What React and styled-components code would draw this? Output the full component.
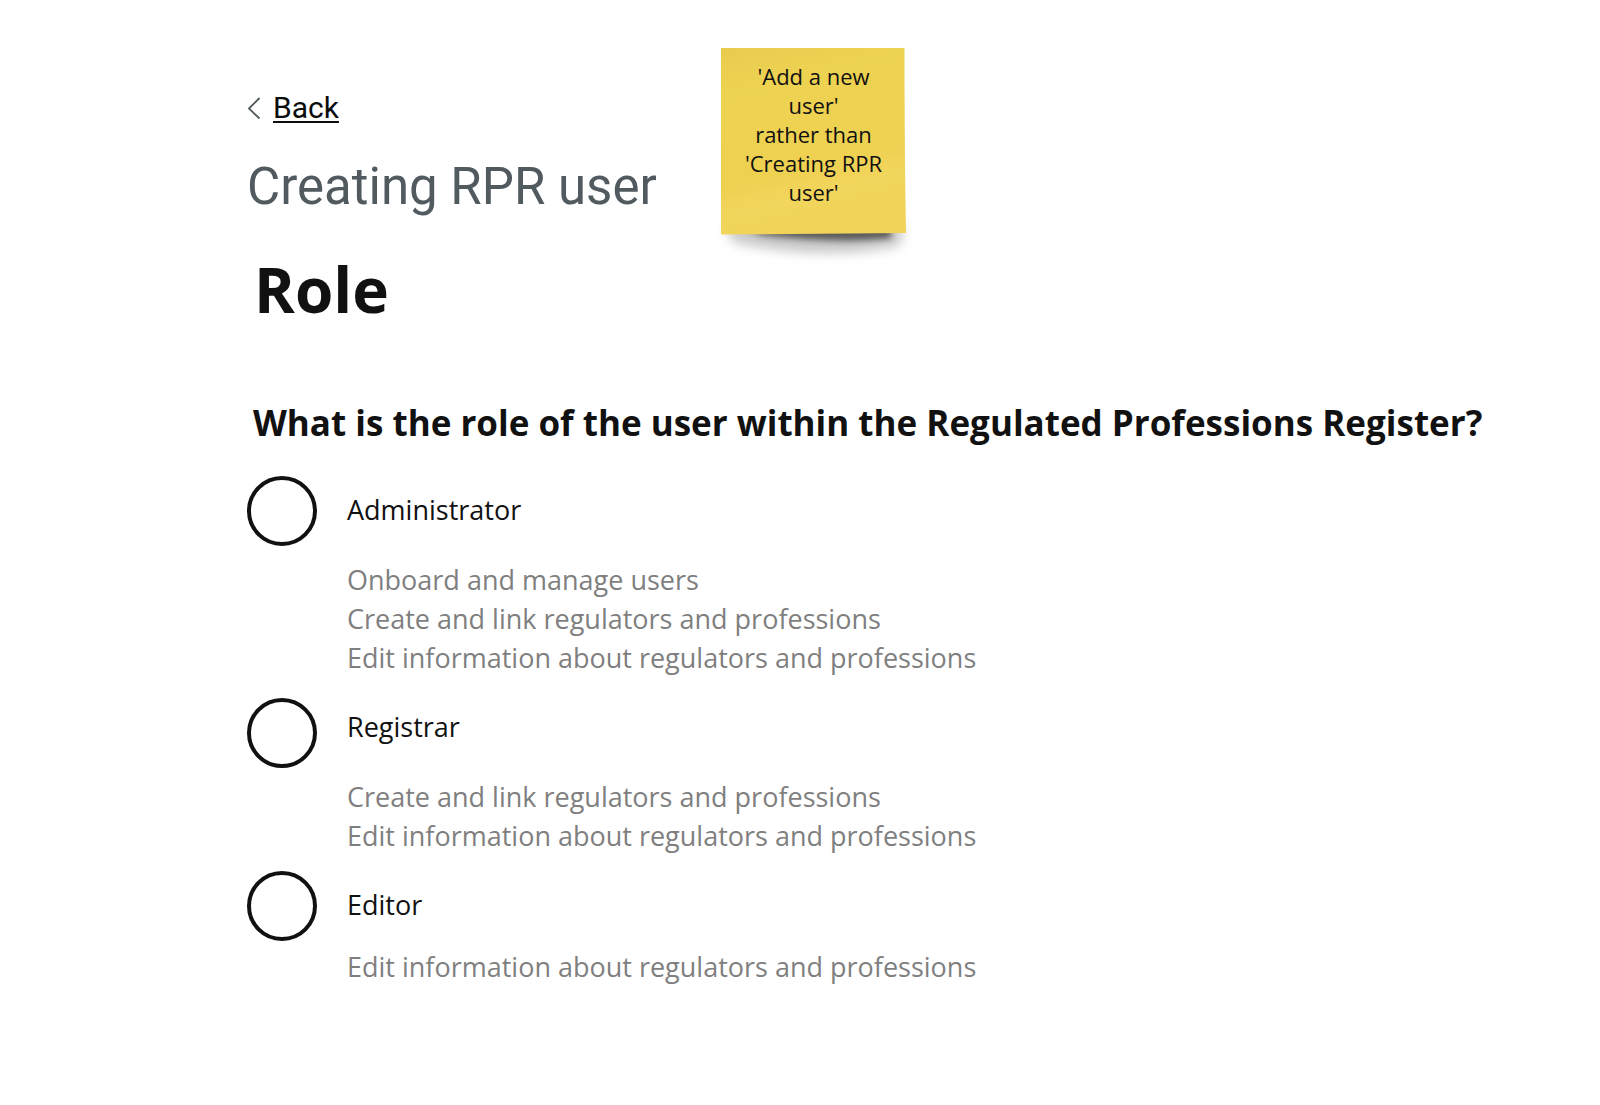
import React from "react";
import styled, { createGlobalStyle } from "styled-components";

const GlobalStyle = createGlobalStyle`
  *, *::before, *::after { box-sizing: border-box; }
  body {
    margin: 0;
    background: #fff;
    color: #111;
    font-family: "Open Sans", "Noto Sans", sans-serif;
  }
`;

const Page = styled.main`
  padding: 48px 48px 96px 247px;
`;

const Header = styled.header`
  display: flex;
  align-items: flex-start;
  gap: 64px;
`;

const Heading = styled.div`
  width: 410px;
  padding-top: 40px;
`;

const BackLink = styled.a`
  display: inline-flex;
  align-items: center;
  gap: 12px;
  color: #0b0c0c;
  font-family: Roboto, "Open Sans", sans-serif;
  font-size: 30px;
  line-height: 40px;
  text-decoration: none;

  span {
    text-decoration: underline;
    text-decoration-thickness: 2px;
    text-underline-offset: 3px;
    text-decoration-skip-ink: none;
  }
`;

const Caption = styled.p`
  margin: 27px 0 0;
  color: #505a5f;
  font-family: Roboto, "Open Sans", sans-serif;
  font-size: 51px;
  line-height: 64px;
  white-space: nowrap;
`;

const Note = styled.aside`
  position: relative;
  width: 185px;
  height: 187px;
  z-index: 0;
`;

const NotePaper = styled.svg`
  position: absolute;
  top: 0;
  left: -15px;
  z-index: -1;
`;

const NoteText = styled.p`
  margin: 0;
  padding: 14px 16px;
  font-size: 22px;
  line-height: 29px;
  text-align: center;
`;

const Title = styled.h1`
  margin: 12px 0 0 7px;
  font-size: 62px;
  line-height: 84px;
  font-weight: 700;
`;

const Roles = styled.fieldset`
  margin: 68px 0 0;
  padding: 0;
  border: 0;
`;

const Question = styled.legend`
  padding: 0 0 0 6px;
  margin-bottom: 29px;
  font-size: 35px;
  line-height: 48px;
  font-weight: 700;
`;

const Option = styled.div`
  display: grid;
  grid-template-columns: 70px 1fr;
  column-gap: 30px;
  margin-bottom: ${(p) => p.$after}px;
`;

const Radio = styled.input`
  appearance: none;
  width: 70px;
  height: 70px;
  margin: 0;
  border: 4px solid #111;
  border-radius: 50%;
  background: #fff;
  cursor: pointer;

  &:checked {
    background: radial-gradient(circle, #111 0 17px, #fff 18px);
  }
`;

const Details = styled.div`
  display: flex;
  flex-direction: column;
  align-items: flex-start;
  gap: ${(p) => p.$gap}px;
  padding-top: ${(p) => p.$inset}px;
  font-size: 27px;
  line-height: 39px;
`;

const Label = styled.label`
  cursor: pointer;
`;

const Hints = styled.ul`
  margin: 0;
  padding: 0;
  list-style: none;
  color: #7f7f7f;
`;

const roles = [
  {
    id: "administrator",
    name: "Administrator",
    hints: [
      "Onboard and manage users",
      "Create and link regulators and professions",
      "Edit information about regulators and professions",
    ],
    inset: 14,
    gap: 31,
    after: 21,
  },
  {
    id: "registrar",
    name: "Registrar",
    hints: [
      "Create and link regulators and professions",
      "Edit information about regulators and professions",
    ],
    inset: 9,
    gap: 31,
    after: 16,
  },
  {
    id: "editor",
    name: "Editor",
    hints: ["Edit information about regulators and professions"],
    inset: 14,
    gap: 23,
    after: 0,
  },
];

export default function App() {
  return (
    <>
      <GlobalStyle />
      <Page>
        <Header>
          <Heading>
            <BackLink href="#back">
              <svg width="14" height="24" viewBox="0 0 14 24" fill="none" aria-hidden="true">
                <path d="M12.5 2 2 12.5 12.5 22.5" stroke="#505a5f" strokeWidth="1.8" />
              </svg>
              <span>Back</span>
            </BackLink>
            <Caption>Creating RPR user</Caption>
          </Heading>
          <Note>
            <NotePaper width="220" height="225" viewBox="-15 0 220 225" aria-hidden="true">
              <defs>
                <linearGradient id="paper" x1="0" y1="0" x2="0.25" y2="1">
                  <stop offset="0" stopColor="#e9cc4e" />
                  <stop offset="0.25" stopColor="#eed252" />
                  <stop offset="0.7" stopColor="#eed151" />
                  <stop offset="0.85" stopColor="#f2d55c" />
                  <stop offset="1" stopColor="#f0d358" />
                </linearGradient>
                <filter id="soft" x="-20%" y="-100%" width="140%" height="300%">
                  <feGaussianBlur stdDeviation="6" />
                </filter>
                <filter id="tight" x="-20%" y="-100%" width="140%" height="300%">
                  <feGaussianBlur stdDeviation="3" />
                </filter>
              </defs>
              <path d="M4 178H184L178 198Q100 214 12 194Z" fill="#000" opacity="0.22" filter="url(#soft)" />
              <path d="M20 178H170V190Q120 196 40 187Z" fill="#000" opacity="0.55" filter="url(#tight)" />
              <path d="M0 0H183.500Q183.500 100 185 185L0 186.500Z" fill="url(#paper)" />
            </NotePaper>
            <NoteText>
              'Add a new user'
              <br />
              rather than 'Creating RPR user'
            </NoteText>
          </Note>
        </Header>
        <Title>Role</Title>
        <Roles>
          <Question>What is the role of the user within the Regulated Professions Register?</Question>
          {roles.map((role) => (
            <Option key={role.id} $after={role.after}>
              <Radio type="radio" name="role" id={role.id} aria-describedby={`${role.id}-hints`} />
              <Details $inset={role.inset} $gap={role.gap}>
                <Label htmlFor={role.id}>{role.name}</Label>
                <Hints id={`${role.id}-hints`}>
                  {role.hints.map((hint) => (
                    <li key={hint}>{hint}</li>
                  ))}
                </Hints>
              </Details>
            </Option>
          ))}
        </Roles>
      </Page>
    </>
  );
}
